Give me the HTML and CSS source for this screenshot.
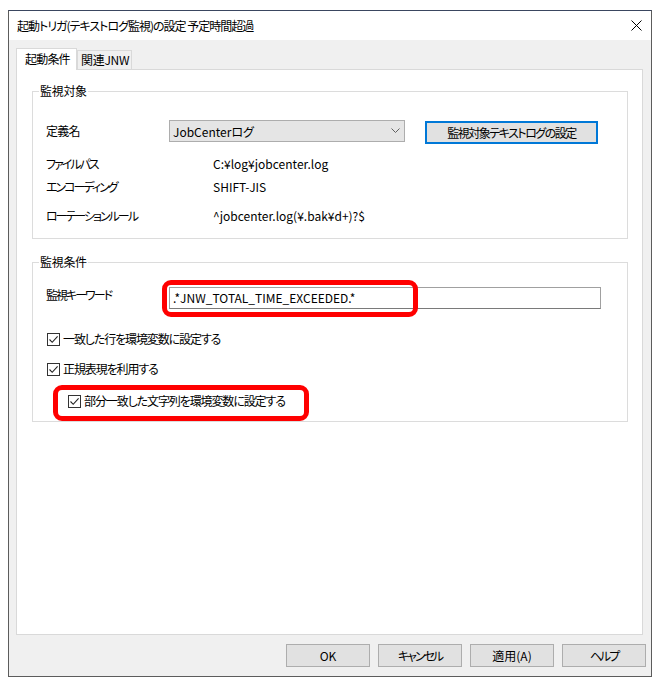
FILE: index.html
```html
<!DOCTYPE html>
<html lang="ja">
<head>
<meta charset="utf-8">
<link rel="stylesheet" href="styles.css">
</head>
<body>
<div class="window">
  <div class="titlebar">
    <span class="title">起動トリガ(テキストログ監視)の設定 予定時間超過</span>
    <svg class="close" width="11" height="11" viewBox="0 0 11 11"><path d="M0.5 0.5 L10.5 10.5 M10.5 0.5 L0.5 10.5" stroke="#000" stroke-width="1" fill="none"/></svg>
  </div>
  <div class="client">
    <div class="tabs">
      <div class="tab active">起動条件</div>
      <div class="tab">関連JNW</div>
    </div>
    <div class="panel">
      <div class="group g1">
        <span class="legend">監視対象</span>
        <div class="row r1">
          <span class="lbl lbl-combo">定義名</span>
          <div class="combo"><span>JobCenterログ</span>
            <svg width="9" height="6" viewBox="0 0 9 6"><path d="M0.5 0.5 L4.5 4.5 L8.5 0.5" stroke="#606060" stroke-width="1" fill="none"/></svg>
          </div>
          <div class="btn primary">監視対象テキストログの設定</div>
        </div>
        <div class="row info r2"><span class="lbl">ファイルパス</span><span class="val">C:¥log¥jobcenter.log</span></div>
        <div class="row info r3"><span class="lbl">エンコーディング</span><span class="val">SHIFT-JIS</span></div>
        <div class="row info r4"><span class="lbl">ローテーションルール</span><span class="val">^jobcenter.log(¥.bak¥d+)?$</span></div>
      </div>
      <div class="group g2">
        <span class="legend">監視条件</span>
        <div class="row kw">
          <span class="lbl lbl-kw">監視キーワード</span>
          <div class="input">.*JNW_TOTAL_TIME_EXCEEDED.*</div>
        </div>
        <div class="check c1"><span class="box"><svg width="11" height="11" viewBox="0 0 11 11"><path d="M1.5 5.5 L4.2 8.3 L9.6 2.3" stroke="#222" stroke-width="1.1" fill="none"/></svg></span><span class="ctext">一致した行を環境変数に設定する</span></div>
        <div class="check c2"><span class="box"><svg width="11" height="11" viewBox="0 0 11 11"><path d="M1.5 5.5 L4.2 8.3 L9.6 2.3" stroke="#222" stroke-width="1.1" fill="none"/></svg></span><span class="ctext">正規表現を利用する</span></div>
        <div class="check c3"><span class="box"><svg width="11" height="11" viewBox="0 0 11 11"><path d="M1.5 5.5 L4.2 8.3 L9.6 2.3" stroke="#222" stroke-width="1.1" fill="none"/></svg></span><span class="ctext">部分一致した文字列を環境変数に設定する</span></div>
        <div class="mark m1"></div>
        <div class="mark m2"></div>
      </div>
    </div>
    <div class="footer">
      <div class="btn fbtn">OK</div>
      <div class="btn fbtn kana">キャンセル</div>
      <div class="btn fbtn">適用(A)</div>
      <div class="btn fbtn kana">ヘルプ</div>
    </div>
  </div>
</div>
</body>
</html>
```

FILE: styles.css
```css
* { box-sizing: border-box; }
html, body { margin: 0; padding: 0; background: #fff; }
body {
  font-family: "Noto Sans CJK JP", "Noto Sans", sans-serif;
  font-size: 12px;
  font-feature-settings: "palt";
  color: #000;
}
.window {
  margin: 10px 0 0 8px;
  width: 644px;
  height: 667px;
  border: 1px solid #5c5c5c;
  border-top-color: #3a4660;
  display: flex;
  flex-direction: column;
}
.titlebar {
  height: 29px;
  flex: none;
  background: #fff;
  display: flex;
  align-items: center;
  justify-content: space-between;
  padding: 0 9px 0 8px;
}
.title { line-height: 16px; letter-spacing: -1px; }
.client {
  flex: 1;
  background: #f0f0f0;
  padding: 8px 8px 0 7px;
  display: flex;
  flex-direction: column;
}
.tabs {
  display: flex;
  align-items: flex-end;
  height: 22px;
  margin-bottom: -1px;
  flex: none;
}
.tab {
  border: 1px solid #d9d9d9;
  border-bottom: none;
  line-height: 18px;
  height: 20px;
  padding-left: 3px;
  width: 55px;
  background: #f0f0f0;
  letter-spacing: -0.3px;
}
.tab.active {
  position: relative;
  z-index: 1;
  height: 22px;
  line-height: 20px;
  width: 61px;
  padding-left: 8px;
  background: #fff;
  letter-spacing: -0.8px;
}
.panel {
  flex: none;
  height: 566px;
  background: #fff;
  border: 1px solid #d9d9d9;
  padding: 21px 14px 0 15px;
}
.group {
  position: relative;
  border: 1px solid #dcdcdc;
  padding-left: 13px;
}
.g1 { height: 148px; padding-top: 28px; }
.g2 { height: 160px; margin-top: 23px; padding-top: 24px; }
.legend {
  position: absolute;
  top: -9px;
  left: 6px;
  background: #fff;
  padding: 0 1px;
  line-height: 16px;
  letter-spacing: -0.3px;
}
.row { display: flex; align-items: flex-start; }
.r1 { height: 24px; }
.lbl { letter-spacing: -2px; }
.lbl-combo { width: 123px; line-height: 22px; letter-spacing: -0.7px; }
.combo {
  width: 236px;
  height: 22px;
  background: #e5e5e5;
  border: 1px solid #adadad;
  padding: 0 4px 0 3px;
  display: flex;
  align-items: center;
  justify-content: space-between;
}
.btn {
  background: #e1e1e1;
  border: 1px solid #adadad;
  text-align: center;
  display: flex;
  align-items: center;
  justify-content: center;
}
.btn.primary {
  margin-left: 20px;
  margin-top: 1px;
  width: 173px;
  height: 23px;
  border: 2px solid #0078d7;
  letter-spacing: -1.5px;
}
.info { line-height: 20px; height: 20px; }
.info .lbl { width: 167px; }
.r2 { margin-top: 10px; }
.r3 { margin-top: 3px; }
.r4 { margin-top: 9px; }
.kw { height: 22px; }
.lbl-kw { width: 123px; line-height: 16px; }
.input {
  width: 432px;
  height: 22px;
  border: 1px solid #a0a0a0;
  border-bottom-color: #7a7a7a;
  padding-left: 3px;
  line-height: 20px;
  background: #fff;
}
.check {
  display: flex;
  align-items: center;
  height: 16px;
  line-height: 16px;
  margin-left: 1px;
}
.ctext { letter-spacing: -1.1px; }
.box {
  width: 13px;
  height: 13px;
  border: 1px solid #333;
  background: #fff;
  margin-right: 3px;
  display: flex;
  align-items: center;
  justify-content: center;
  flex: none;
}
.c1 { margin-top: 22px; }
.c2 { margin-top: 14px; }
.c3 { margin-top: 16px; margin-left: 22px; }
.mark {
  position: absolute;
  border: 5px solid #ff0000;
  border-radius: 9px;
}
.m1 { left: 129px; top: 17px; width: 256px; height: 37px; }
.m2 { left: 20px; top: 122px; width: 256px; height: 36px; }
.footer {
  display: flex;
  justify-content: flex-end;
  gap: 8px;
  margin-top: 9px;
  margin-right: -3px;
}
.fbtn { width: 84px; height: 23px; }
.fbtn.kana { letter-spacing: -2px; }
```
